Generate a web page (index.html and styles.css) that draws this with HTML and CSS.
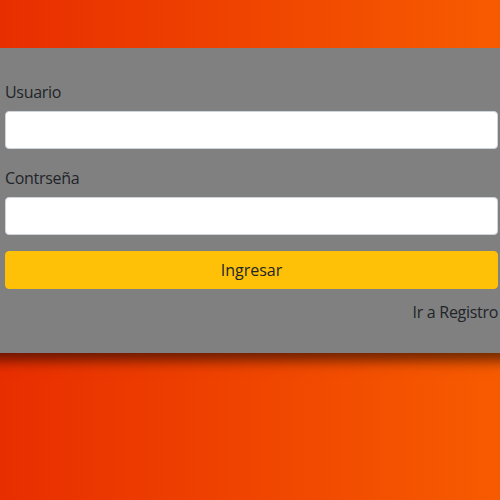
FILE: index.html
```html
<!DOCTYPE html>
<html lang="es">
<head>
<meta charset="utf-8">
<title>Login</title>
<link rel="stylesheet" href="styles.css">
</head>
<body>
<div class="card">
  <form class="form">
    <label class="label" for="u">Usuario</label>
    <input class="input" id="u" type="text">
    <label class="label second" for="p">Contrseña</label>
    <input class="input" id="p" type="password">
    <button class="btn" type="button">Ingresar</button>
    <div class="link-row"><a class="link" href="#">Ir a Registro</a></div>
  </form>
</div>
</body>
</html>
```
FILE: styles.css
```css
html, body {
  margin: 0;
  height: 100%;
}
body {
  background: linear-gradient(to right, #e82e00, #f75b00);
  font-family: "Open Sans", "Noto Sans", sans-serif;
  font-size: 16px;
  letter-spacing: -0.3px;
  color: #212529;
  padding-top: 48px;
  box-sizing: border-box;
}
.card {
  background: #808080;
  padding: 31px 2px 29px 5px;
  box-shadow: 0 -22px 12px 30px rgba(0, 0, 0, 0.55);
  clip-path: inset(0 0 -40px 0);
}
.form {
  display: flex;
  flex-direction: column;
}
.label {
  line-height: 24px;
  padding-top: 1px;
  margin-bottom: 7px;
}
.second {
  margin-top: 16px;
}
.input {
  height: 38px;
  box-sizing: border-box;
  border: 1px solid #ced4da;
  border-radius: 4px;
  background: #fff;
  padding: 6px 12px;
  font: inherit;
}
.btn {
  margin-top: 16px;
  height: 38px;
  border: 1px solid #ffc107;
  background: #ffc107;
  border-radius: 4px;
  color: #212529;
  font: inherit;
  padding-top: 1px;
}
.link-row {
  margin-top: 10px;
  padding-top: 1px;
  text-align: right;
  line-height: 24px;
}
.link {
  color: #212529;
  text-decoration: none;
}
```
